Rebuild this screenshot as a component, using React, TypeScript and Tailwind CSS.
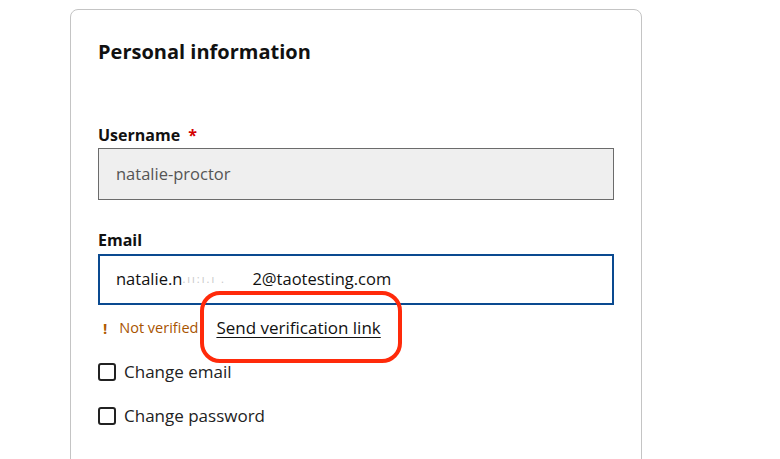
import React from 'react';

function Checkbox({ label }: { label: string }) {
  return (
    <label className="flex items-center gap-[8px] h-[22px]">
      <span className="w-[18px] h-[18px] rounded-[3px] border-2 border-[#222]" />
      <span className="text-[17px] text-[#222]">{label}</span>
    </label>
  );
}

export default function App() {
  return (
    <div className="w-[780px] h-[459px] overflow-hidden bg-white font-['Open_Sans',sans-serif] text-[#111]">
      <div className="ml-[70px] mt-[9px] w-[572px] h-[470px] rounded-t-[8px] border border-[#c4c4c4] px-[27px] pt-[28px]">
        <h2 className="text-[20px] font-bold leading-[28px]">Personal information</h2>

        <div className="mt-[58px]">
          <div className="text-[16px] font-bold leading-[22px]">
            Username <span className="ml-[4px] text-[#d40000]">*</span>
          </div>
          <div className="mt-[2px] h-[52px] border border-[#6b6b6b] bg-[#efefef] px-[17px] flex items-center text-[16.5px] text-[#555]">
            natalie-proctor
          </div>
        </div>

        <div className="mt-[29px]">
          <div className="text-[16px] font-bold leading-[22px]">Email</div>
          <div className="mt-[3px] h-[51px] border-2 border-[#0a4a90] px-[16px] flex items-center text-[16.5px] text-[#111]">
            natalie.n
            <span className="inline-block w-[70px] text-[#c8c8c8] text-[11px] tracking-[2px]">.ıı:ı.ı . </span>
            2@taotesting.com
          </div>
        </div>

        <div className="relative mt-[12px] flex items-center h-[22px]">
          <span className="ml-[5px] text-[15px] font-bold text-[#b05a00]">!</span>
          <span className="ml-[12px] text-[14.5px] text-[#a85400]">Not verified</span>
          <a href="#" className="ml-[18px] text-[17px] text-[#111] underline underline-offset-[3px]">
            Send verification link
          </a>
          <div className="absolute left-[102px] top-[-26px] w-[202px] h-[72px] rounded-[20px] border-[4.5px] border-[#ff2a0a]" />
        </div>

        <div className="mt-[22px] flex flex-col gap-[22px]">
          <Checkbox label="Change email" />
          <Checkbox label="Change password" />
        </div>
      </div>
    </div>
  );
}
